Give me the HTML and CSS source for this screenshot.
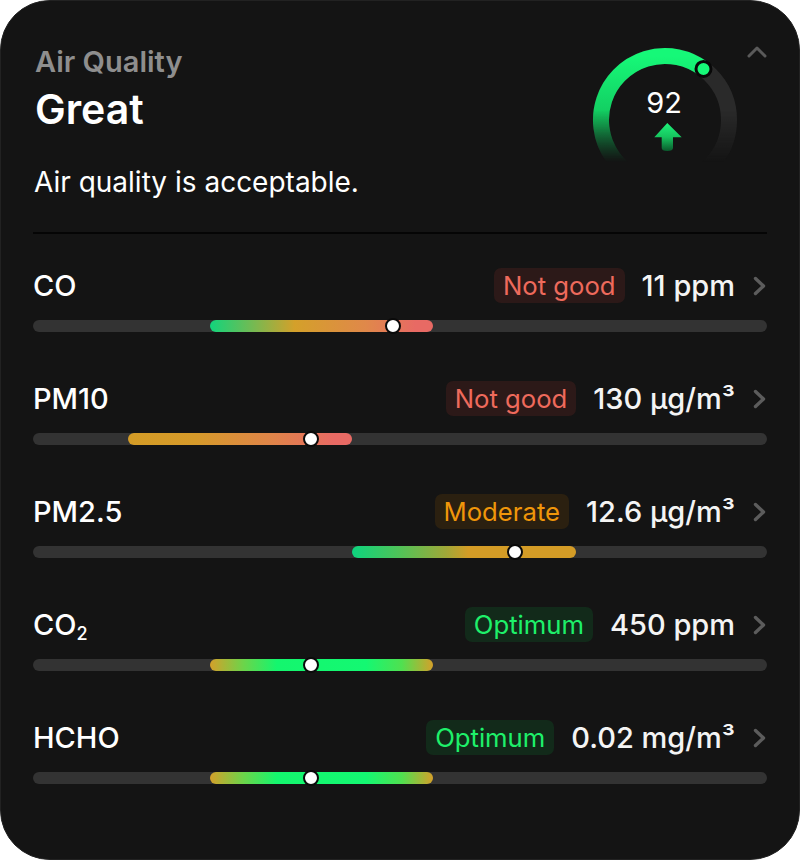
FILE: index.html
```html
<!DOCTYPE html>
<html>
    <head>
        <meta charset="utf-8">
        <title>Air Quality</title>
        <link rel="stylesheet" href="styles.css">
    </head>
    <body>
        <div class="card">
            <div class="summary">
                <div class="summary-text">
                    <div class="kicker">Air Quality</div>
                    <div class="level">Great</div>
                    <p class="note">Air quality is acceptable.</p>
                </div>
                <div class="summary-side">
                    <svg class="gauge" width="150" height="115" viewBox="0 0 150 115">
                        <defs>
                            <linearGradient id="arcGreen" gradientUnits="userSpaceOnUse" x1="0" y1="9" x2="0" y2="137">
                                <stop offset="0" stop-color="#16f878"/>
                                <stop offset="0.55" stop-color="#12c45c"/>
                                <stop offset="1" stop-color="#08602e"/>
                            </linearGradient>
                            <linearGradient id="fadeDown" gradientUnits="userSpaceOnUse" x1="0" y1="0" x2="0" y2="115">
                                <stop offset="0.55" stop-color="#fff"/>
                                <stop offset="1" stop-color="#000"/>
                            </linearGradient>
                            <linearGradient id="arrowGreen" gradientUnits="userSpaceOnUse" x1="0" y1="76" x2="0" y2="104">
                                <stop offset="0" stop-color="#1ef27a"/>
                                <stop offset="0.5" stop-color="#16c45e"/>
                                <stop offset="1" stop-color="#0a5a2c"/>
                            </linearGradient>
                            <mask id="ringMask">
                                <rect width="150" height="115" fill="url(#fadeDown)"/>
                            </mask>
                        </defs>
                        <g mask="url(#ringMask)">
                            <circle cx="75" cy="73" r="64" fill="none" stroke="#2a2a2a" stroke-width="16"/>
                            <path d="M75 137 A64 64 0 1 1 113.5 21.9" fill="none" stroke="url(#arcGreen)" stroke-width="16"/>
                        </g>
                        <circle cx="113.5" cy="21.9" r="7.5" fill="#16f878" stroke="#080808" stroke-width="3"/>
                        <text class="gauge-num" x="74" y="66" text-anchor="middle">92</text>
                        <path d="M77.3 76 L91.7 90.3 L83 90.3 L83 101 Q83 104 77.3 104 Q71.7 104 71.7 101 L71.7 90.3 L64.3 90.3 Z" fill="url(#arrowGreen)"/>
                    </svg>
                    <svg class="collapse" width="20" height="13" viewBox="0 0 20 13">
                        <path d="M2 11 L10 3 L18 11" fill="none" stroke="#5a5a5a" stroke-width="3" stroke-linecap="round" stroke-linejoin="round"/>
                    </svg>
                </div>
            </div>

            <hr class="divider">

            <ul class="readings">
                <li class="reading">
                    <div class="reading-head">
                        <span class="name">CO</span>
                        <span class="badge badge-bad">Not good</span>
                        <span class="value">11 ppm</span>
                        <svg class="more" width="15" height="20" viewBox="0 0 15 20"><path d="M3.5 2.5 L11.5 10 L3.5 17.5" fill="none" stroke="#5c5c5c" stroke-width="3.4" stroke-linecap="round" stroke-linejoin="round"/></svg>
                    </div>
                    <div class="track">
                        <div class="fill fill-co" style="left:24.1%;width:30.4%"></div>
                        <span class="knob" style="left:49%"></span>
                    </div>
                </li>
                <li class="reading">
                    <div class="reading-head">
                        <span class="name">PM10</span>
                        <span class="badge badge-bad">Not good</span>
                        <span class="value">130 μg/m³</span>
                        <svg class="more" width="15" height="20" viewBox="0 0 15 20"><path d="M3.5 2.5 L11.5 10 L3.5 17.5" fill="none" stroke="#5c5c5c" stroke-width="3.4" stroke-linecap="round" stroke-linejoin="round"/></svg>
                    </div>
                    <div class="track">
                        <div class="fill fill-pm10" style="left:12.9%;width:30.5%"></div>
                        <span class="knob" style="left:37.9%"></span>
                    </div>
                </li>
                <li class="reading">
                    <div class="reading-head">
                        <span class="name">PM2.5</span>
                        <span class="badge badge-mid">Moderate</span>
                        <span class="value">12.6 μg/m³</span>
                        <svg class="more" width="15" height="20" viewBox="0 0 15 20"><path d="M3.5 2.5 L11.5 10 L3.5 17.5" fill="none" stroke="#5c5c5c" stroke-width="3.4" stroke-linecap="round" stroke-linejoin="round"/></svg>
                    </div>
                    <div class="track">
                        <div class="fill fill-pm25" style="left:43.5%;width:30.5%"></div>
                        <span class="knob" style="left:65.7%"></span>
                    </div>
                </li>
                <li class="reading">
                    <div class="reading-head">
                        <span class="name">CO<sub>2</sub></span>
                        <span class="badge badge-ok">Optimum</span>
                        <span class="value">450 ppm</span>
                        <svg class="more" width="15" height="20" viewBox="0 0 15 20"><path d="M3.5 2.5 L11.5 10 L3.5 17.5" fill="none" stroke="#5c5c5c" stroke-width="3.4" stroke-linecap="round" stroke-linejoin="round"/></svg>
                    </div>
                    <div class="track">
                        <div class="fill fill-optimum" style="left:24.1%;width:30.4%"></div>
                        <span class="knob" style="left:37.9%"></span>
                    </div>
                </li>
                <li class="reading">
                    <div class="reading-head">
                        <span class="name">HCHO</span>
                        <span class="badge badge-ok">Optimum</span>
                        <span class="value">0.02 mg/m³</span>
                        <svg class="more" width="15" height="20" viewBox="0 0 15 20"><path d="M3.5 2.5 L11.5 10 L3.5 17.5" fill="none" stroke="#5c5c5c" stroke-width="3.4" stroke-linecap="round" stroke-linejoin="round"/></svg>
                    </div>
                    <div class="track">
                        <div class="fill fill-optimum" style="left:24.1%;width:30.4%"></div>
                        <span class="knob" style="left:37.9%"></span>
                    </div>
                </li>
            </ul>
        </div>
    </body>
</html>
```

FILE: styles.css
```css
body {
    margin: 0;
    background-color: #fff;
    font-family: "Inter", "Noto Sans", sans-serif;
}

div.card {
    box-sizing: border-box;
    width: 800px;
    height: 860px;
    padding: 44px 32px 0;
    background-color: #141414;
    border: 1px solid #222;
    border-radius: 50px;
    color: #fff;
}

/* header: title, status and gauge */
div.summary {
    display: flex;
    justify-content: space-between;
    align-items: flex-start;
}
div.summary-text {
    padding-left: 2px;
}
div.kicker {
    font-size: 29px;
    line-height: 34px;
    font-weight: 600;
    color: #8e8e8e;
}
div.level {
    margin-top: 7px;
    font-size: 41px;
    line-height: 46px;
    font-weight: 600;
}
p.note {
    margin: 35px 0 0 -1px;
    font-size: 28px;
    line-height: 30px;
}
div.summary-side {
    display: flex;
    gap: 7px;
}
svg.gauge {
    margin-top: 2px;
}
svg.gauge text.gauge-num {
    font-family: "Inter", "Noto Sans", sans-serif;
    font-size: 29px;
    fill: #fff;
}

hr.divider {
    height: 2px;
    margin: 35px 0 0;
    border: none;
    background-color: #050505;
}

/* readings list */
ul.readings {
    list-style: none;
    margin: 34px 0 0;
    padding: 0;
}
li.reading + li.reading {
    margin-top: 49px;
}
div.reading-head {
    display: flex;
    align-items: center;
    height: 35px;
}
span.name {
    flex: 1;
    font-size: 29px;
    font-weight: 500;
}
span.name sub {
    font-size: 18px;
    vertical-align: -5px;
    line-height: 0;
}
span.badge {
    padding: 0 9px;
    border-radius: 7px;
    font-size: 25.7px;
    line-height: 35px;
}
span.badge-bad {
    background-color: #2c1918;
    color: #ee6a5c;
}
span.badge-mid {
    background-color: #2b2010;
    color: #f0960a;
}
span.badge-ok {
    background-color: #122a1a;
    color: #1ef06a;
}
span.value {
    margin-left: 17px;
    font-size: 29px;
    font-weight: 500;
    color: #f4f4f4;
}
svg.more {
    margin-left: 17px;
}

div.track {
    position: relative;
    height: 12px;
    margin-top: 17px;
    background-color: #333;
    border-radius: 6px;
}
div.fill {
    position: absolute;
    top: 0;
    bottom: 0;
    border-radius: 6px;
}
div.fill-co {
    background: linear-gradient(90deg, #12d47c 0%, #d4a02a 38%, #e0884a 70%, #e86a64 92%);
}
div.fill-pm10 {
    background: linear-gradient(90deg, #d49c26 0%, #d69a2a 30%, #e0844a 65%, #e86a64 92%);
}
div.fill-pm25 {
    background: linear-gradient(90deg, #0dd47e 0%, #4cc45a 20%, #a0a838 42%, #d49c26 52%, #d49c26 100%);
}
div.fill-optimum {
    background: linear-gradient(90deg, #d4a02a 0%, #6cd44a 15%, #14f66e 30%, #14f872 70%, #50e050 86%, #d4a02a 100%);
}
span.knob {
    position: absolute;
    top: 50%;
    width: 12px;
    height: 12px;
    background-color: #fff;
    border: 2px solid #0a0a0a;
    border-radius: 50%;
    transform: translate(-50%, -50%);
}
```
